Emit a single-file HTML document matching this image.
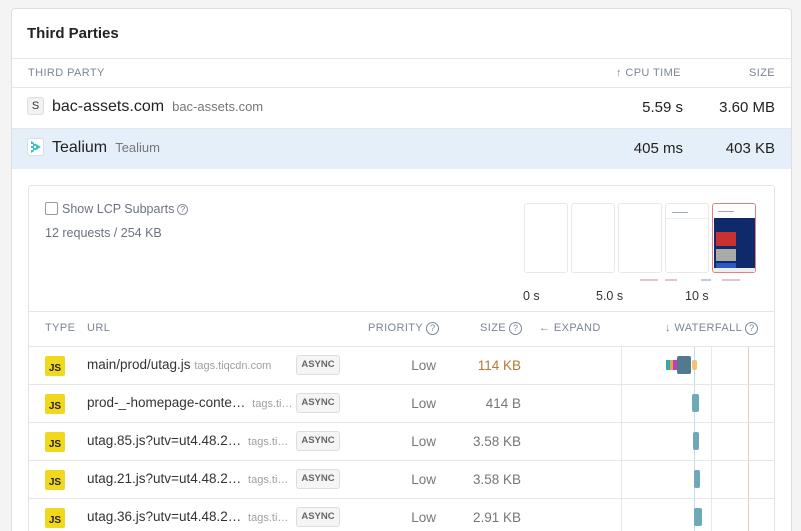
<!DOCTYPE html>
<html style="width:801px;height:531px;overflow:hidden"><head><style>
*{box-sizing:border-box;margin:0;padding:0}
body{width:801px;height:531px;overflow:hidden;background:#f4f4f4;font-family:"Liberation Sans",sans-serif;position:relative}
.a{position:absolute}
.card{left:11px;top:8px;width:781px;height:540px;background:#fff;border:1px solid #dedede;border-radius:4px}
.hl{position:absolute;height:1px;background:#e6e6e6}
.cap{font-size:11px;color:#7b8594;letter-spacing:.4px;line-height:13px;white-space:nowrap}
.q{display:inline-block;width:13px;height:13px;border:1.2px solid #7b8594;border-radius:50%;font-size:9px;text-align:center;line-height:11px;vertical-align:top;margin-left:3px;letter-spacing:0}
.js{width:20px;height:20px;background:#f0d81c;border-radius:2px;font-weight:bold;font-size:10px;color:#222;text-align:center;padding-top:7px;line-height:12px}
.url{font-size:13.5px;color:#333;white-space:nowrap}
.dom{font-size:11px;color:#a0a0a0}
.badge{width:44px;height:20px;border:1px solid #ddd;background:#f5f5f5;border-radius:3px;font-size:9.5px;font-weight:bold;color:#666;text-align:center;line-height:18px}
.num{font-size:13.5px;color:#777;text-align:right}
.th{width:44px;height:70px;border:1px solid #e8e8e8;border-radius:3px;background:#fff;top:203px}
</style></head><body>
<div class="a card"></div>
<div class="a" style="left:27px;top:25px;font-size:15px;font-weight:bold;color:#222">Third Parties</div>
<div class="hl" style="left:12px;width:779px;top:58px"></div>
<div class="a cap" style="left:28px;top:67px">THIRD PARTY</div>
<div class="a cap" style="left:616px;top:67px">↑ CPU TIME</div>
<div class="a cap" style="left:749px;top:67px">SIZE</div>
<div class="hl" style="left:12px;width:779px;top:87px"></div>
<div class="a" style="left:27px;top:97px;width:17px;height:18px;border:1px solid #ddd;background:#f2f2f2;border-radius:3px;font-size:11px;text-align:center;line-height:16px;color:#333">S</div>
<div class="a" style="left:52px;top:98px;font-size:16px;color:#222">bac-assets.com <span style="font-size:13px;color:#777">&nbsp;bac-assets.com</span></div>
<div class="a" style="right:118px;top:99px;font-size:15px;color:#222">5.59 s</div>
<div class="a" style="right:26px;top:99px;font-size:15px;color:#222">3.60 MB</div>
<div class="hl" style="left:12px;width:779px;top:128px"></div>
<div class="a" style="left:12px;top:129px;width:779px;height:40px;background:#e5eff9"></div>
<div class="a" style="left:27px;top:138px;width:17px;height:18px;border:1px solid #ddd;background:#fff;border-radius:3px"><svg width="15" height="16" viewBox="0 0 15 16"><path d="M3 2l10 6-10 6z" fill="#3bbfd1"/><path d="M3 5h2v2H3zM3 9h2v2H3zM6 7h2v2H6zM6 3h1v2H6zM6 11h1v2H6z" fill="#fff"/></svg></div>
<div class="a" style="left:52px;top:139px;font-size:16px;color:#222">Tealium <span style="font-size:13px;color:#777">&nbsp;Tealium</span></div>
<div class="a" style="right:118px;top:140px;font-size:15px;color:#222">405 ms</div>
<div class="a" style="right:26px;top:140px;font-size:15px;color:#222">403 KB</div>
<div class="a" style="left:28px;top:185px;width:747px;height:360px;border:1px solid #e3e3e3;border-radius:3px"></div>
<div class="a" style="left:45px;top:202px;width:13px;height:13px;border:1px solid #999;border-radius:2px"></div>
<div class="a" style="left:62px;top:202px;font-size:12.5px;color:#6b7380;white-space:nowrap">Show LCP Subparts<span class="q" style="width:11px;height:11px;font-size:8px;line-height:9px;margin-top:2px;border-color:#8a919c">?</span></div>
<div class="a" style="left:45px;top:226px;font-size:12.5px;color:#6b7380">12 requests / 254 KB</div>
<div class="a th" style="left:524px"></div>
<div class="a th" style="left:571px"></div>
<div class="a th" style="left:618px"></div>
<div class="a th" style="left:665px"><div style="margin:8px 0 0 6px;width:16px;height:1px;background:#9ab"></div><div style="margin-top:5px;height:1px;background:#eee"></div></div>
<div class="a th" style="left:712px;border-color:#e08080;background:#fff"><div style="position:absolute;left:5px;top:7px;width:16px;height:1px;background:#9ab"></div><div style="position:absolute;left:1px;top:14px;width:41px;height:54px;background:#0e2a6a"></div><div style="position:absolute;left:3px;top:28px;width:20px;height:14px;background:#c93030"></div><div style="position:absolute;left:3px;top:45px;width:20px;height:12px;background:#aaa"></div><div style="position:absolute;left:3px;top:59px;width:20px;height:7px;background:#2a5ac0"></div><div style="position:absolute;left:1px;top:64px;width:41px;height:4px;background:#eee"></div></div>
<div class="a" style="left:640px;top:279px;width:18px;height:2px;background:#e3c4d3"></div>
<div class="a" style="left:665px;top:279px;width:12px;height:2px;background:#e3c4d3"></div>
<div class="a" style="left:701px;top:279px;width:10px;height:2px;background:#bcd"></div>
<div class="a" style="left:722px;top:279px;width:18px;height:2px;background:#e3c4d3"></div>
<div class="a" style="left:523px;top:289px;font-size:12.5px;color:#333">0 s</div>
<div class="a" style="left:596px;top:289px;font-size:12.5px;color:#333">5.0 s</div>
<div class="a" style="left:685px;top:289px;font-size:12.5px;color:#333">10 s</div>
<div class="hl" style="left:29px;width:745px;top:311px"></div>
<div class="a cap" style="left:45px;top:322px">TYPE</div>
<div class="a cap" style="left:87px;top:322px">URL</div>
<div class="a cap" style="left:368px;top:322px">PRIORITY<span class="q">?</span></div>
<div class="a cap" style="left:480px;top:322px">SIZE<span class="q">?</span></div>
<div class="a cap" style="left:539px;top:322px">← EXPAND</div>
<div class="a cap" style="left:665px;top:322px">↓ WATERFALL<span class="q">?</span></div>
<div class="hl" style="left:29px;width:745px;top:346px"></div>
<div class="a" style="left:621px;top:347px;width:1px;height:190px;background:#e8e8e8"></div>
<div class="a" style="left:711px;top:347px;width:1px;height:190px;background:#e8e8e8"></div>
<div class="a" style="left:694px;top:347px;width:1px;height:190px;background:#c8d8f0"></div>
<div class="a" style="left:748px;top:347px;width:1px;height:190px;background:#f0c8c0"></div>

<div class="a js" style="left:45px;top:356px">JS</div>
<div class="a url" style="left:87px;top:357px">main/prod/utag.js <span class="dom">tags.tiqcdn.com</span></div>
<div class="a badge" style="left:296px;top:355px">ASYNC</div>
<div class="a num" style="left:370px;width:66px;top:358px">Low</div>
<div class="a num" style="left:450px;width:71px;top:358px;color:#b87a30">114 KB</div>
<div class="a" style="left:666px;top:360px;width:4px;height:10px;background:#3aa"></div>
<div class="a" style="left:670px;top:360px;width:3px;height:10px;background:#e9a33a"></div>
<div class="a" style="left:673px;top:360px;width:4px;height:10px;background:#c03cc0"></div>
<div class="a" style="left:677px;top:356px;width:14px;height:18px;background:#4f7a90;border-radius:2px"></div>
<div class="a" style="left:692px;top:360px;width:5px;height:10px;background:#f0c470;border-radius:2px"></div>
<div class="hl" style="left:29px;width:745px;top:384px"></div>

<div class="a js" style="left:45px;top:394px">JS</div>
<div class="a url" style="left:87px;top:395px">prod-_-homepage-conte… <span class="dom">&nbsp;tags.ti…</span></div>
<div class="a badge" style="left:296px;top:393px">ASYNC</div>
<div class="a num" style="left:370px;width:66px;top:396px">Low</div>
<div class="a num" style="left:450px;width:71px;top:396px">414 B</div>
<div class="a" style="left:692px;top:394px;width:7px;height:18px;background:#6fa8b8;border-radius:2px"></div>
<div class="hl" style="left:29px;width:745px;top:422px"></div>

<div class="a js" style="left:45px;top:432px">JS</div>
<div class="a url" style="left:87px;top:433px">utag.85.js?utv=ut4.48.2… <span class="dom">&nbsp;tags.ti…</span></div>
<div class="a badge" style="left:296px;top:431px">ASYNC</div>
<div class="a num" style="left:370px;width:66px;top:434px">Low</div>
<div class="a num" style="left:450px;width:71px;top:434px">3.58 KB</div>
<div class="a" style="left:693px;top:432px;width:6px;height:18px;background:#6fa8b8;border-radius:2px"></div>
<div class="hl" style="left:29px;width:745px;top:460px"></div>

<div class="a js" style="left:45px;top:470px">JS</div>
<div class="a url" style="left:87px;top:471px">utag.21.js?utv=ut4.48.2… <span class="dom">&nbsp;tags.ti…</span></div>
<div class="a badge" style="left:296px;top:469px">ASYNC</div>
<div class="a num" style="left:370px;width:66px;top:472px">Low</div>
<div class="a num" style="left:450px;width:71px;top:472px">3.58 KB</div>
<div class="a" style="left:694px;top:470px;width:6px;height:18px;background:#6fa8b8;border-radius:2px"></div>
<div class="hl" style="left:29px;width:745px;top:498px"></div>

<div class="a js" style="left:45px;top:508px">JS</div>
<div class="a url" style="left:87px;top:509px">utag.36.js?utv=ut4.48.2… <span class="dom">&nbsp;tags.ti…</span></div>
<div class="a badge" style="left:296px;top:507px">ASYNC</div>
<div class="a num" style="left:370px;width:66px;top:510px">Low</div>
<div class="a num" style="left:450px;width:71px;top:510px">2.91 KB</div>
<div class="a" style="left:694px;top:508px;width:8px;height:18px;background:#6fa8b8;border-radius:2px"></div>
</body></html>
